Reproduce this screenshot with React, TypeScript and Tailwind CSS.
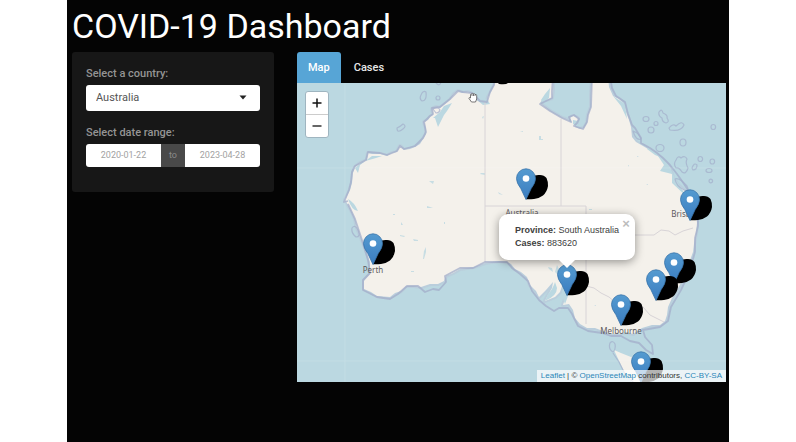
import React, { useState } from "react";

const COAST =
  "M347 203 L345 200 L350 190 L352 183 L353 173 L355 167 L360 163 L367 160 L368 153 L372 154 L380 154 L387 156 L392 153 L397 152 L400 146 L404 150 L410 149 L415 147 L420 144 L423 139 L426 134 L426 128 L424 122 L428 120 L430 117 L433 115 L432 109 L436 107 L440 108 L445 104 L450 100 L454 94 L458 91 L462 93 L468 92 L472 94 L476 100 L480 102 L487 102 L488 97 L491 92 L495 83 L495 76 L553 76 L553 83 L553 91 L552 98 L546 100 L544 97 L540 103 L545 107 L550 111 L557 115 L562 118 L568 120 L572 123 L570 118 L573 116 L578 118 L577 123 L575 127 L580 129 L584 128 L587 123 L588 115 L591 107 L591 95 L592 76 L608 76 L609 87 L613 96 L619 99 L624 104 L626 112 L629 120 L631 127 L632 137 L636 142 L643 146 L648 149 L655 153 L660 158 L665 163 L670 168 L673 178 L678 185 L684 190 L689 197 L691 205 L696 213 L697 223 L696 233 L694 244 L693 252 L689 263 L687 273 L682 281 L677 290 L672 298 L668 307 L667 315 L665 321 L660 325 L652 325 L642 328 L633 334 L626 332 L618 334 L612 334 L603 331 L595 328 L587 328 L580 324 L575 318 L573 310 L569 304 L563 305 L565 299 L566 291 L563 283 L560 292 L555 297 L545 301 L547 297 L552 288 L553 282 L546 290 L539 297 L536 291 L530 285 L527 277 L521 272 L515 269 L511 264 L507 262 L499 261 L485 263 L474 267 L467 268 L460 269 L453 273 L446 276 L444 281 L438 284 L430 284 L421 287 L414 286 L406 286 L401 291 L395 293 L390 297 L377 296 L371 292 L364 289 L364 281 L370 274 L370 262 L366 250 L362 240 L357 228 L355 219 L352 212 Z";

const OFFSHORE =
  "M348 201 L344 202 L349 190 L351 182 L352 172 L355 166 L366 160 L368 152 L380 153 L387 155 L397 151 L400 146 L404 149 L415 146 L423 138 L426 132 L424 122 L430 116 L433 114 L432 108 L440 107 L450 99 L458 91 L463 92 L472 93 L480 101 L487 102 L490 92 L494 85 L495 76 M553 76 L552 91 L552 98 L540 104 L550 111 L562 118 L571 122 L569 117 L574 115 L579 119 L577 123 L574 126 L583 129 L587 122 L588 115 L591 107 L592 76 M610 76 L612 88 L616 96 L625 102 L628 114 L632 125 L635 128 L641 138 L641 143 L650 148 L657 153 L663 158 L670 165 L677 174 L682 181 L688 190 L691 200 L698 214 L698 226 L695 238 L695 252 L689 273 L681 290 L671 307 L668 321 L660 327 L643 330 L645 337 L652 345 L653 354 L646 350 L639 343 L630 341 L621 336 L611 336 L602 333 L588 331 L578 326 L572 314 L568 308 L559 308 L554 311 L546 306 L539 300 L532 291 L528 281 L520 274 L512 268 L507 262 L485 262 L473 268 L460 268 L445 276 L446 282 L439 290 L433 289 L425 292 L418 286 L407 286 L398 294 L390 299 L377 297 L363 290 L363 280 L370 273 L368 260 L362 240 L357 225 L355 219 L348 204";

const REEFS =
  "M643 119 a3 2.500 0 1 0 6 0 a3 2.500 0 1 0 -6 0z M648 130 a3 3 0 1 0 6 0 a3 3 0 1 0 -6 0z M654 123.500 a2 2 0 1 0 4 0 a2 2 0 1 0 -4 0z M659 112 q3 -4 4 1 q5 2 4 5 q3 4 -1 5 q-4 -1 -4 -5 q-4 -2 -3 -6z M669 128 q4 -5 7 -2 q6 -6 8 -1 q-3 7 -14 5z M711 127 a2.300 2.500 0 1 0 4.600 0 a2.300 2.500 0 1 0 -4.600 0z M680 142.500 a3 3.500 0 1 0 6 0 a3 3.500 0 1 0 -6 0z M656 148 a4 3.500 0 1 0 8 0 a4 3.500 0 1 0 -8 0z M676 160 q2 -5 5 -2 q4 -3 6 1 q-2 4 1 9 q-2 7 -6 4 q-3 -5 -6 -4 q-3 -4 0 -8z M692 168 q2 -6 5 -3 q0 5 -4 5z M698 159 a2.300 2.500 0 1 0 4.600 0 a2.300 2.500 0 1 0 -4.600 0z M710 161.500 a2.300 2.500 0 1 0 4.600 0 a2.300 2.500 0 1 0 -4.600 0z M706 170.500 a3 2 0 1 0 6 0 a3 2 0 1 0 -6 0z M709 181 a1.800 1.800 0 1 0 3.600 0 a1.800 1.800 0 1 0 -3.600 0z M675 179 q4 -2 12 7 q3 6 -3 4 q-8 -4 -9 -11z M421 95 q2 -5 5 -3 q1 9 -4 9 q-3 -2 -1 -6z M436 98 a2 2 0 1 0 4 0 a2 2 0 1 0 -4 0z M397 128 q4 -2 6 -4 q4 2 0 5 q-6 5 -6 -1z M436 83 q4 4 5 -1 M352 228 q3 -4 6 2 q3 7 -2 7 q-5 -4 -4 -9z M610 343 q3 -3 5 1 q1 6 -2 8 q-5 -3 -3 -9z M433 109 q5 -3 7 1 q-1 3 -4 3z M633 131 q6 2 8 8 q-5 2 -8 -8z M613 353 L619 362 L625 374 L634 383";

const INLETS =
  "M355 168 L362 162 L376 158 L382 156 L372 156 L360 165 L358 173z M348 199 q6 3 10 12 q-6 0 -10 -12z M433 118 L440 112 L444 106 L452 103 L447 111 L444 115 L438 127 L435 118z M477 100 L483 105 L490 104 L487 99z M541 100 L545 94 L550 88 L549 98 L543 103z M573 120 l5 1 l1 7 l-6 -4z M656 153 L664 165 L660 171 L672 174 L672 183 L687 197 L676 180 L667 162z M647 149 L655 155 L660 157 L650 146z M548 294 q5 -5 7 -12 l2 6 q0 8 -12 13z M563 285 l5 11 l-3 8 l-3 -8z M613 96 l8 10 l6 13 l-2 -15z";

const LAKES =
  "M400 235 l5 1 l-1 1 l-4 -1z M413 239 l5 1 v1 h-4z M429 181 l5 0 l-1 3z M481 173 h4 v2 l-5 -1z M482 117 l2 -1 l-1 3z M520 131 h3 v1z M539 136 h2 v3 h2 v1 h-4z M589 209 h3 v1 h-3z M498 192 l5 3 l-4 -1z M427 206 l6 2 h-6z M393 214 h2 v1 h-2z M424 251 l2 -4 v5 l-2 7 h-1z M411 271 h3 v1 h-3z M371 240 l1 3 h-1z M555 272 l2 -7 l2 4 l-2 5z M548 267 l4 1 l1 4 l-4 -3z M646 184 h2 v1z M628 165 h1 v2z M594 305 h2 v1z M401 222 l2 3 h-2z M444 222 h1 v2 h-1z M637 156 l2 1 h-2z";

const BORDERS =
  "M485 102 V262 M561 119 V206 M485 206 H586 V324 M586 235 H654 L661 230 L669 231 L675 235 L683 231 L693 228 M586 286 L594 288 L601 293 L609 297 L616 303 L628 310 L643 307 L650 315 L664 322";

const MARKERS = [
  { name: "Northern Territory", x: 229, y: 116 },
  { name: "Queensland", x: 393, y: 137 },
  { name: "Western Australia", x: 76, y: 181 },
  { name: "New South Wales", x: 377, y: 200 },
  { name: "South Australia", x: 270, y: 212 },
  { name: "Australian Capital Territory", x: 359, y: 217 },
  { name: "Victoria", x: 324, y: 242 },
  { name: "Tasmania", x: 344, y: 299 },
];

const LABELS = [
  { text: "Perth", x: 76, y: 187 },
  { text: "Australia", x: 225, y: 130 },
  { text: "Brisbane", x: 391, y: 131 },
  { text: "Melbourne", x: 324, y: 248 },
];

function MapArt() {
  return (
    <svg
      className="absolute inset-0 size-full"
      viewBox="297 83 429 299"
      preserveAspectRatio="xMinYMin slice"
      aria-hidden="true"
    >
      <g stroke="#b9cbda" strokeWidth="4" strokeLinejoin="round" opacity="0.7">
        <path d={COAST} fill="none" />
      </g>
      <path d={COAST} fill="#f4f1eb" />
      <path d="M614 350 L621 353 L631 357 L641 354 L648 355 L650 364 L647 375 L642 385 L634 385 L626 375 L621 365z" fill="#f4f1eb" />
      <path d={INLETS} fill="#bbd8e1" />
      <path d={LAKES} fill="#bbd8e1" opacity="0.8" />
      <path d={BORDERS} fill="none" stroke="#d8d4d7" strokeWidth="1" />
      <g fill="none" stroke="#a3aeca" strokeLinejoin="round">
        <path d={OFFSHORE} strokeWidth="1.800" opacity="0.75" />
        <path d={REEFS} strokeWidth="1.200" opacity="0.7" />
      </g>
      <path d="M297 168 H726 M345 83 V382 M297 361 H726" stroke="#ffffff" strokeWidth="1" opacity="0.12" />
      <path d="M498 83 h10 q-2 2 -9 1z" fill="#000" />
    </svg>
  );
}

function Pin() {
  return (
    <svg width="36" height="32" viewBox="0 0 36 32" aria-hidden="true">
      <defs>
        <linearGradient id="pin" x1="0" y1="0" x2="0" y2="1">
          <stop offset="0" stopColor="#559bd0" />
          <stop offset="1" stopColor="#3a7cc0" />
        </linearGradient>
        <filter id="soft" x="-20%" y="-20%" width="140%" height="140%">
          <feGaussianBlur stdDeviation="0.6" />
        </filter>
      </defs>
      <path
        d="M11 31.300 L17 9 Q20 6.500 25 7 Q29 7 31.500 10 Q33 13 33 18 Q32 24 28 27.500 Q24 30.500 19 31 Q15 31.500 11 31.300z"
        fill="#000"
        filter="url(#soft)"
      />
      <path
        d="M11 31.500 L5.800 20.500 Q1.500 15 1.500 10.500 A9.500 9.700 0 0 1 20.500 10.500 Q20.500 15 16.200 20.500z"
        fill="url(#pin)"
        stroke="#3874a9"
        strokeWidth="0.8"
      />
      <circle cx="11" cy="10.500" r="3.300" fill="#fff" />
    </svg>
  );
}

function Hand() {
  return (
    <svg className="absolute left-[171px] top-[9px]" width="10" height="11" viewBox="0 0 10 11" aria-hidden="true">
      <path
        d="M2.500 6 V2.500 Q3.200 1.300 4 2.300 Q4.500 .8 5.500 1.900 Q6.500 1 7 2.500 Q8.600 2 8.700 3.600 V7 L7.500 10 H3.500 L.9 6.300 Q1 5 2.500 6z M4 2.300 V4 M5.500 2 V4 M7 2.500 V4"
        fill="#fff"
        stroke="#555"
        strokeWidth="0.8"
      />
    </svg>
  );
}

function CasesMap() {
  const [open, setOpen] = useState(true);
  return (
    <div className="relative h-[299px] overflow-hidden bg-[#bbd8e1]">
      <MapArt />
      {LABELS.map((l) => (
        <span
          key={l.text}
          className="absolute -translate-x-1/2 -translate-y-1/2 whitespace-nowrap font-['Noto_Sans',sans-serif] text-[8px] leading-none text-[#5d5a5d]"
          style={{ left: l.x, top: l.y }}
        >
          {l.text}
        </span>
      ))}
      {MARKERS.map((m) => (
        <button
          key={m.name}
          type="button"
          aria-label={m.name}
          onClick={() => setOpen(true)}
          className="absolute"
          style={{ left: m.x - 11, top: m.y - 31 }}
        >
          <Pin />
        </button>
      ))}
      <Hand />
      {open && (
        <div className="absolute left-[202px] top-[131px] w-[136px] font-['Liberation_Sans',Arial,sans-serif]">
          <div className="relative rounded-[9px] bg-white px-4 py-[10px] text-[9px] leading-[13px] text-[#404040] shadow-[0_2px_10px_rgba(0,0,0,0.4)]">
            <p className="whitespace-nowrap">
              <b>Province:</b> South Australia
            </p>
            <p>
              <b>Cases:</b> 883620
            </p>
            <button
              type="button"
              aria-label="Close popup"
              onClick={() => setOpen(false)}
              className="absolute right-[3px] top-1 size-3 text-[13px] font-bold leading-3 text-[#bcbcbc]"
            >
              ×
            </button>
          </div>
          <svg className="relative mx-auto block" width="16" height="8" viewBox="0 0 16 8" aria-hidden="true">
            <path d="M0 0 H16 L8 8z" fill="#fff" />
          </svg>
        </div>
      )}
      <div className="absolute left-2 top-2 flex w-6 flex-col overflow-hidden rounded-[3px] border border-[#9fb5c0] bg-white text-black">
        <button type="button" aria-label="Zoom in" className="flex h-[23px] items-center justify-center border-b border-[#ccc]">
          <svg width="10" height="10" viewBox="0 0 10 10" aria-hidden="true">
            <path d="M.5 5 H9.500 M5 .5 V9.500" stroke="#111" strokeWidth="1.500" />
          </svg>
        </button>
        <button type="button" aria-label="Zoom out" className="flex h-[22px] items-center justify-center">
          <svg width="10" height="10" viewBox="0 0 10 10" aria-hidden="true">
            <path d="M.5 5 H9.500" stroke="#333" strokeWidth="1.500" />
          </svg>
        </button>
      </div>
      <div className="absolute bottom-0 right-0 whitespace-nowrap bg-white/70 px-1 font-['Liberation_Sans',Arial,sans-serif] text-[8px] leading-3 text-[#333]">
        <a href="#leaflet" className="text-[#2a86b8]">Leaflet</a> | ©{" "}
        <a href="#osm" className="text-[#2a86b8]">OpenStreetMap</a> contributors,{" "}
        <a href="#license" className="text-[#2a86b8]">CC-BY-SA</a>
      </div>
    </div>
  );
}

function Sidebar() {
  return (
    <form className="flex w-[202px] shrink-0 flex-col gap-[14px] self-start rounded-[3px] bg-[#171717] px-[14px] pb-[25px] pt-[14px]">
      <div>
        <label htmlFor="country" className="mb-[3px] block text-[11px] font-medium leading-4 text-[#949494]">
          Select a country:
        </label>
        <div className="relative">
          <select
            id="country"
            defaultValue="Australia"
            className="block h-[26px] w-full appearance-none rounded-[3px] bg-white px-[10px] text-[11px] text-[#555]"
          >
            <option>Australia</option>
          </select>
          <svg className="pointer-events-none absolute right-[13px] top-[10px]" width="8" height="5" viewBox="0 0 8 5" aria-hidden="true">
            <path d="M0.500 0.500 H7.500 L4 4.500z" fill="#222" />
          </svg>
        </div>
      </div>
      <fieldset className="min-w-0">
        <legend className="mb-[3px] block text-[11px] font-medium leading-4 text-[#949494]">Select date range:</legend>
        <div className="flex h-[23px] overflow-hidden rounded-[3px] text-[9px]">
          <input aria-label="Start date" defaultValue="2020-01-22" className="w-0 flex-1 bg-white text-center text-[#a2a2a2]" />
          <span className="flex w-6 items-center justify-center bg-[#494949] text-[#8a8a8a]">to</span>
          <input aria-label="End date" defaultValue="2023-04-28" className="w-0 flex-1 bg-white text-center text-[#a2a2a2]" />
        </div>
      </fieldset>
    </form>
  );
}

export default function App() {
  return (
    <div className="min-h-screen bg-white px-[67px] font-[Roboto,sans-serif]">
      <div className="min-h-screen bg-[#040404] pl-[5px] pr-[3px]">
        <h1 className="text-[34px] leading-[52px] text-white">COVID-19 Dashboard</h1>
        <div className="flex gap-[23px]">
          <Sidebar />
          <main className="min-w-0 flex-1">
            <nav role="tablist" className="flex gap-[2px] text-[11px] font-medium leading-[31px]">
              <button type="button" role="tab" aria-selected="true" className="rounded-t-[3px] bg-[#57a5d6] px-[11px] text-white">
                Map
              </button>
              <button type="button" role="tab" aria-selected="false" className="px-[11px] text-[#e8e8e8]">
                Cases
              </button>
            </nav>
            <CasesMap />
          </main>
        </div>
      </div>
    </div>
  );
}
